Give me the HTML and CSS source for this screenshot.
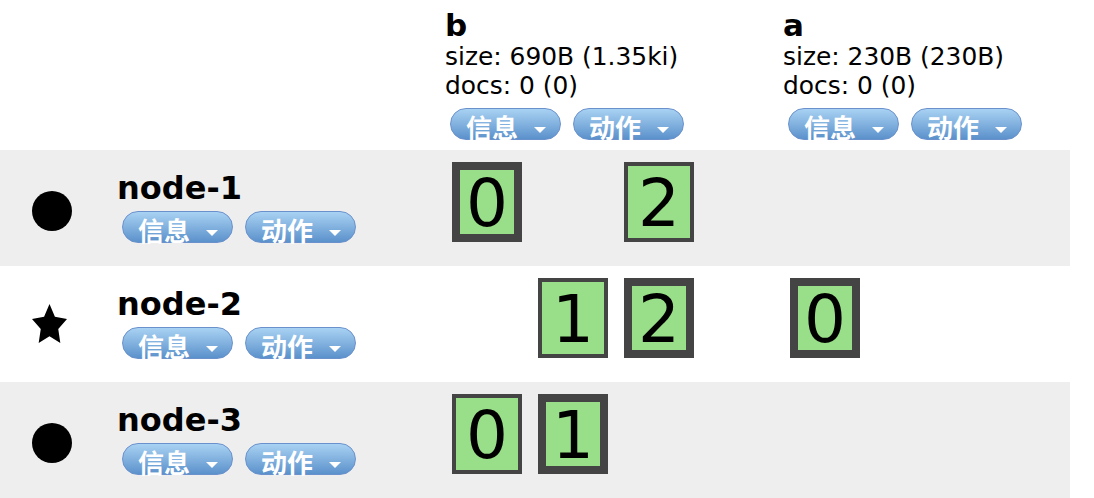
FILE: index.html
```html
<!DOCTYPE html>
<html lang="zh-CN">
<head>
    <meta charset="UTF-8">
    <title>集群概览</title>
    <link rel="stylesheet" href="styles.css">
</head>
<body>
    <div class="cluster">
        <div class="row head">
            <div class="cell"></div>
            <div class="cell index">
                <div class="name">b</div>
                <div class="info">size: 690B (1.35ki)</div>
                <div class="info">docs: 0 (0)</div>
                <div class="btns">
                    <span class="pill">信息<i class="caret"></i></span>
                    <span class="pill">动作<i class="caret"></i></span>
                </div>
            </div>
            <div class="cell index">
                <div class="name">a</div>
                <div class="info">size: 230B (230B)</div>
                <div class="info">docs: 0 (0)</div>
                <div class="btns">
                    <span class="pill">信息<i class="caret"></i></span>
                    <span class="pill">动作<i class="caret"></i></span>
                </div>
            </div>
        </div>

        <div class="row node">
            <div class="cell nodecell">
                <svg class="icon dot" width="40" height="40" viewBox="0 0 40 40"><circle cx="20" cy="20" r="20"/></svg>
                <div>
                    <div class="name">node-1</div>
                    <div class="btns">
                        <span class="pill">信息<i class="caret"></i></span>
                        <span class="pill">动作<i class="caret"></i></span>
                    </div>
                </div>
            </div>
            <div class="cell shards">
                <div class="shard primary">0</div>
                <div class="slot"></div>
                <div class="shard">2</div>
            </div>
            <div class="cell shards"></div>
        </div>

        <div class="row node">
            <div class="cell nodecell">
                <svg class="icon star" width="35" height="39" viewBox="0.88 1 34.24 32.56" preserveAspectRatio="none"><path d="M18 1 L23.29 11.72 L35.12 13.44 L26.56 21.78 L28.58 33.56 L18 28 L7.42 33.56 L9.44 21.78 L0.88 13.44 L12.71 11.72 Z"/></svg>
                <div>
                    <div class="name">node-2</div>
                    <div class="btns">
                        <span class="pill">信息<i class="caret"></i></span>
                        <span class="pill">动作<i class="caret"></i></span>
                    </div>
                </div>
            </div>
            <div class="cell shards">
                <div class="slot"></div>
                <div class="shard">1</div>
                <div class="shard primary">2</div>
            </div>
            <div class="cell shards">
                <div class="shard primary">0</div>
            </div>
        </div>

        <div class="row node">
            <div class="cell nodecell">
                <svg class="icon dot" width="40" height="40" viewBox="0 0 40 40"><circle cx="20" cy="20" r="20"/></svg>
                <div>
                    <div class="name">node-3</div>
                    <div class="btns">
                        <span class="pill">信息<i class="caret"></i></span>
                        <span class="pill">动作<i class="caret"></i></span>
                    </div>
                </div>
            </div>
            <div class="cell shards">
                <div class="shard">0</div>
                <div class="shard primary">1</div>
            </div>
            <div class="cell shards"></div>
        </div>
    </div>
</body>
</html>
```

FILE: styles.css
```css
body {
    margin: 0;
    padding: 0;
    background: #fff;
    color: #000;
    font-family: 'DejaVu Sans', Verdana, 'Noto Sans CJK SC', sans-serif;
}

.cluster {
    width: 1070px;
}

.row {
    display: grid;
    grid-template-columns: 445px 338px 1fr;
}

.head {
    height: 150px;
}

.node {
    height: 116px;
}

.node:nth-child(even) {
    background: #eeeeee;
}

.name {
    font-size: 32px;
    font-weight: bold;
    line-height: 34px;
}

.index {
    padding-top: 8px;
}

.index .name {
    font-size: 31px;
}

.info {
    font-size: 24.9px;
    line-height: 29px;
}

.btns {
    display: flex;
    gap: 12px;
    margin-left: 5px;
}

.index .btns {
    margin-top: 8px;
}

.nodecell {
    display: flex;
    align-items: flex-start;
    padding-left: 32px;
    padding-top: 21px;
}

.nodecell .btns {
    margin-top: 6px;
}

.icon {
    display: block;
    flex: none;
    fill: #000;
}

.dot {
    margin-top: 20px;
    margin-right: 45px;
}

.star {
    margin-top: 17px;
    margin-right: 50px;
}

.pill {
    display: flex;
    align-items: flex-start;
    box-sizing: border-box;
    height: 32px;
    padding: 3px 14px 0 15px;
    border: 1.5px solid #6a91cc;
    border-radius: 16px;
    background: linear-gradient(#a9d2f3, #5b91cb);
    color: #fff;
    font-family: 'Noto Sans CJK SC', sans-serif;
    font-size: 26px;
    font-weight: bold;
    line-height: 30px;
}

.caret {
    width: 0;
    height: 0;
    margin-left: 16px;
    margin-top: 15px;
    border-left: 6px solid transparent;
    border-right: 6px solid transparent;
    border-top: 6px solid #fff;
}

.shards {
    display: flex;
    align-items: flex-start;
    gap: 16px;
    padding-left: 7px;
    padding-top: 12px;
}

.slot,
.shard {
    width: 70px;
    height: 80px;
    flex: none;
}

.shard {
    display: flex;
    align-items: center;
    justify-content: center;
    box-sizing: border-box;
    padding-top: 4px;
    background: #99de88;
    box-shadow: inset 0 0 0 4px #444;
    font-size: 66px;
    line-height: 80px;
}

.shard.primary {
    box-shadow: inset 0 0 0 8px #444;
}
```
